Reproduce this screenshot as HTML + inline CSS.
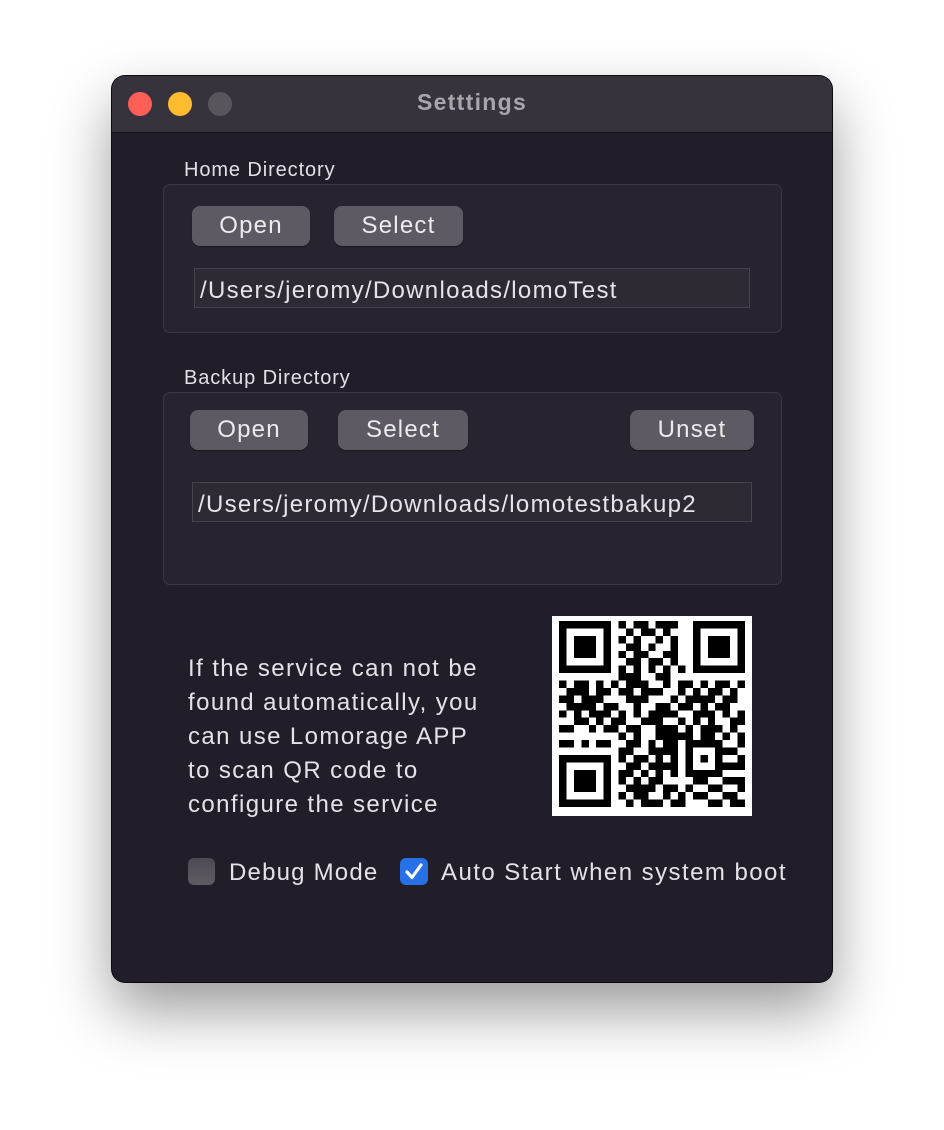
<!DOCTYPE html>
<html><head><meta charset="utf-8">
<style>
html,body{margin:0;padding:0;background:#fff;width:944px;height:1130px;overflow:hidden;font-family:"Liberation Sans",sans-serif;}
.win{position:absolute;left:112px;top:76px;width:720px;height:906px;border-radius:13px;background:#221e29;box-shadow:0 28px 60px rgba(0,0,0,.4),0 0 0 1px #0e0c11;overflow:hidden;}
.tb{position:absolute;left:0;top:0;width:720px;height:56px;background:#36333c;border-bottom:1px solid #111;}
.dot{position:absolute;top:16px;width:24px;height:24px;border-radius:50%;}
.title{position:absolute;left:0;width:720px;top:13px;text-align:center;font-weight:bold;font-size:23px;letter-spacing:1.3px;color:#a8a5ad;}
.abs{position:absolute;}
.lbl{color:#e2e0e6;font-size:20px;letter-spacing:0.9px;}
.box{background:#28242f;border:1px solid #3b3842;border-radius:7px;}
.btn{background:#5d5a63;border-radius:8px;color:#ecebee;font-size:24px;letter-spacing:1.2px;text-align:center;box-shadow:0 1px 1px rgba(0,0,0,.4);}
.fld{background:#2e2a34;border:1px solid #47434d;color:#e6e4e9;font-size:24px;letter-spacing:1.3px;box-sizing:border-box;padding-left:5px;white-space:nowrap;}
.txt{color:#e4e2e7;font-size:24px;letter-spacing:1.4px;white-space:nowrap;}
</style></head><body>
<div class="win">
 <div class="tb">
  <div class="dot" style="left:16px;background:#fe5f57"></div>
  <div class="dot" style="left:56px;background:#febc2e"></div>
  <div class="dot" style="left:96px;background:#58555d"></div>
  <div class="title">Setttings</div>
 </div>
</div>
<div class="abs lbl" style="left:184px;top:159px">Home Directory</div>
<div class="abs box" style="left:163px;top:184px;width:617px;height:147px"></div>
<div class="abs btn" style="left:192px;top:206px;width:118px;height:40px;line-height:40px">Open</div>
<div class="abs btn" style="left:334px;top:206px;width:129px;height:40px;line-height:40px">Select</div>
<div class="abs fld" style="left:194px;top:268px;width:556px;height:40px;line-height:44px">/Users/jeromy/Downloads/lomoTest</div>

<div class="abs lbl" style="left:184px;top:367px">Backup Directory</div>
<div class="abs box" style="left:163px;top:392px;width:617px;height:191px"></div>
<div class="abs btn" style="left:190px;top:410px;width:118px;height:40px;line-height:40px">Open</div>
<div class="abs btn" style="left:338px;top:410px;width:130px;height:40px;line-height:40px">Select</div>
<div class="abs btn" style="left:630px;top:410px;width:124px;height:40px;line-height:40px">Unset</div>
<div class="abs fld" style="left:192px;top:482px;width:560px;height:40px;line-height:44px">/Users/jeromy/Downloads/lomotestbakup2</div>

<div class="abs txt" style="left:188px;top:652px;line-height:34px">If the service can not be<br>found automatically, you<br>can use Lomorage APP<br>to scan QR code to<br>configure the service</div>

<div class="abs" style="left:552px;top:616px;width:200px;height:200px;background:#fff"></div>
<svg id="qr" class="abs" style="left:559px;top:621px" width="186" height="186" viewBox="0 0 25 25" shape-rendering="crispEdges"></svg>

<div class="abs" style="left:188px;top:858px;width:27px;height:27px;border-radius:6px;background:linear-gradient(#4d4a53,#5e5b63)"></div>
<div class="abs txt" style="left:229px;top:859px;letter-spacing:1.2px">Debug Mode</div>
<div class="abs" style="left:400px;top:858px;width:28px;height:27px;border-radius:6px;background:#2670e8">
 <svg width="28" height="27" viewBox="0 0 28 27"><path d="M7 14 L12 19.5 L21 7" fill="none" stroke="#fff" stroke-width="3.2" stroke-linecap="round" stroke-linejoin="round"/></svg>
</div>
<div class="abs txt" style="left:441px;top:859px;letter-spacing:1.45px">Auto Start when system boot</div>
<script>
var rows=["1111111010110111001111111","1000001001011010001000001","1011101010100101001011101","1011101001101001001011101","1011101010110011001011101","1000001001101101001000001","1111111010101010101111111","0000000011100110000000000","1011010101110010110101101","0111011011011100101011010","1101110001110001011110110","0111101100100110110101100","1010111010101111001110101","0011010110011100101010011","1100101101100111010111010","0000000010100111110110101","1101011001101011011111001","0000000011001111010001110","1111111010110101010101001","1000001001101111010001111","1011101011010101011111000","1011101010101100001100111","1011101001111011010011001","1000001010110010101100110","1111111001011101100011011"];
var s="";for(var y=0;y<25;y++)for(var x=0;x<25;x++)if(rows[y][x]=="1")s+="M"+x+" "+y+"h1v1h-1z";
document.getElementById("qr").innerHTML='<path d="'+s+'" fill="#000"/>';
</script>
</body></html>
